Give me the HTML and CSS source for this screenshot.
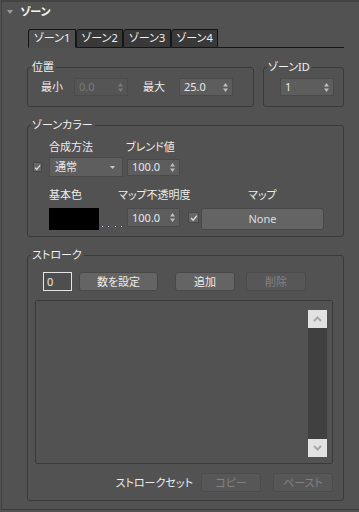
FILE: index.html
```html
<!DOCTYPE html>
<html lang="ja">
<head>
<meta charset="utf-8">
<title>ゾーン</title>
<link rel="stylesheet" href="styles.css">
</head>
<body>
<div class="rollout">
  <div class="rollout-head">
    <svg class="tri" width="6" height="4" viewBox="0 0 6 4"><path d="M0 0H6L3 4Z" fill="#9a9a9a"/></svg>
    <span class="rollout-title">ゾーン</span>
  </div>
  <div class="rollout-body">
    <div class="tabs">
      <div class="tab active w48">ゾーン1</div>
      <div class="tab w47">ゾーン2</div>
      <div class="tab w48">ゾーン3</div>
      <div class="tab w47">ゾーン4</div>
      <div class="tab-fill"></div>
    </div>

    <div class="group-row">
      <fieldset class="group g-pos">
        <legend>位置</legend>
        <div class="gbody pos-body">
          <span class="lbl l-min">最小</span>
          <div class="spin disabled"><span class="val">0.0</span><svg width="5" height="9" viewBox="0 0 5 9"><path d="M2.5 0L5 3.5H0Z M0 5.5H5L2.5 9Z" fill="currentColor"/></svg></div>
          <span class="lbl l-max">最大</span>
          <div class="spin"><span class="val">25.0</span><svg width="5" height="9" viewBox="0 0 5 9"><path d="M2.5 0L5 3.5H0Z M0 5.5H5L2.5 9Z" fill="currentColor"/></svg></div>
        </div>
      </fieldset>
      <fieldset class="group g-id">
        <legend>ゾーンID</legend>
        <div class="gbody id-body">
          <div class="spin"><span class="val">1</span><svg width="5" height="9" viewBox="0 0 5 9"><path d="M2.5 0L5 3.5H0Z M0 5.5H5L2.5 9Z" fill="currentColor"/></svg></div>
        </div>
      </fieldset>
    </div>

    <fieldset class="group g-color">
      <legend>ゾーンカラー</legend>
      <div class="gbody color-body">
        <div class="crow labels1">
          <span class="lbl c-blend-mode">合成方法</span>
          <span class="lbl">ブレンド値</span>
        </div>
        <div class="crow ctrl1">
          <span class="check c1"><svg width="9" height="9" viewBox="0 0 9 9"><path d="M1.2 4.6L3.5 7L7.8 1.8" stroke="#dcdcdc" stroke-width="1.6" fill="none"/></svg></span>
          <div class="dropdown"><span>通常</span><svg width="5" height="3" viewBox="0 0 5 3"><path d="M0 0H5L2.5 3Z" fill="#c8c8c8"/></svg></div>
          <div class="spin s-blend"><span class="val">100.0</span><svg width="5" height="9" viewBox="0 0 5 9"><path d="M2.5 0L5 3.5H0Z M0 5.5H5L2.5 9Z" fill="currentColor"/></svg></div>
        </div>
        <div class="crow labels2">
          <span class="lbl c-base">基本色</span>
          <span class="lbl c-opac">マップ不透明度</span>
          <span class="lbl c-map">マップ</span>
        </div>
        <div class="crow ctrl2">
          <div class="swatch"></div>
          <svg class="dots" width="28" height="3" viewBox="0 0 28 3"><rect x="3" y="1" width="1" height="1" fill="#dfe6ff"/><rect x="9" y="1" width="1" height="1" fill="#dfe6ff"/><rect x="16" y="1" width="1" height="1" fill="#dfe6ff"/><rect x="22" y="1" width="1" height="1" fill="#dfe6ff"/></svg>
          <div class="spin s-opac"><span class="val">100.0</span><svg width="5" height="9" viewBox="0 0 5 9"><path d="M2.5 0L5 3.5H0Z M0 5.5H5L2.5 9Z" fill="currentColor"/></svg></div>
          <span class="check c2"><svg width="9" height="9" viewBox="0 0 9 9"><path d="M1.2 4.6L3.5 7L7.8 1.8" stroke="#dcdcdc" stroke-width="1.6" fill="none"/></svg></span>
          <div class="btn b-none">None</div>
        </div>
      </div>
    </fieldset>

    <fieldset class="group g-stroke">
      <legend>ストローク</legend>
      <div class="gbody stroke-body">
        <div class="srow">
          <div class="num-input">0</div>
          <div class="btn b-count">数を設定</div>
          <div class="btn b-add">追加</div>
          <div class="btn disabled b-del">削除</div>
        </div>
        <div class="listbox">
          <div class="vscroll">
            <div class="sb-btn"><svg width="9" height="6" viewBox="0 0 9 6"><path d="M1 5L4.5 1.5L8 5" stroke="#a8a8a8" stroke-width="2" fill="none"/></svg></div>
            <div class="sb-track"></div>
            <div class="sb-btn"><svg width="9" height="6" viewBox="0 0 9 6"><path d="M1 1L4.5 4.5L8 1" stroke="#a8a8a8" stroke-width="2" fill="none"/></svg></div>
          </div>
        </div>
        <div class="brow">
          <span class="lbl set-lbl">ストロークセット</span>
          <div class="btn disabled b-copy">コピー</div>
          <div class="btn disabled b-paste">ペースト</div>
        </div>
      </div>
    </fieldset>
  </div>
</div>
</body>
</html>
```
FILE: styles.css
```css
* { box-sizing: border-box; }
html, body { margin: 0; padding: 0; background: #525252; }
body {
  width: 359px;
  height: 512px;
  overflow: hidden;
  font-family: "Noto Sans", "Noto Sans CJK JP", sans-serif;
  font-size: 11px;
  line-height: 14px;
  color: #ebebeb;
  font-feature-settings: "palt";
}

.rollout {
  margin-left: 1px;
  height: 510px;
  border-left: 1px solid #3f3f3f;
  border-top: 2px solid #444444;
  border-bottom: 1px solid #3b3b3b;
}
.rollout-head {
  height: 20px;
  display: flex;
  align-items: center;
}
.tri { margin-left: 5px; }
.rollout-title {
  margin-left: 7px;
  font-weight: 700;
  color: #f2f2f2;
}
.rollout-body {
  padding: 7px 0 0 25px;
  width: 342px;
}

/* tabs */
.tabs {
  display: flex;
  height: 19px;
  margin-left: 1px;
  width: 316px;
}
.tab {
  height: 19px;
  border: 1px solid #151515;
  border-top-left-radius: 3px;
  background: #393939;
  color: #f0f0f0;
  text-align: center;
  line-height: 16px;
}
.tab.active { background: #4f4f4f; border-bottom-color: #4f4f4f; }
.w48 { width: 48px; }
.w47 { width: 47px; }
.tab-fill { flex: 1; border-bottom: 1px solid #151515; }

/* groups */
.group {
  margin: 0;
  padding: 0;
  min-width: 0;
  border: 1px solid #3a3a3a;
  border-radius: 3px;
}
.group legend {
  margin-left: 3px;
  padding: 0 2px 0 1px;
  line-height: 14px;
  height: 14px;
  color: #f0f0f0;
}
.group-row {
  display: flex;
  gap: 9px;
  margin-top: 12px;
}
.g-pos { width: 227px; }
.g-id { width: 81px; }
.gbody { display: flex; }
.pos-body { padding: 4px 0 10px 13px; align-items: center; }
.id-body { padding: 4px 0 10px 16px; }
.l-min { width: 33px; }
.l-max { width: 36px; margin-left: 15px; }

.spin {
  width: 54px;
  height: 18px;
  background: #5d5d5d;
  border: 1px solid #4a4a4a;
  display: flex;
  align-items: center;
  justify-content: space-between;
  padding: 0 4px 0 4px;
  color: #bdbdbd;
}
.spin .val { color: #e8e8e8; }
.spin.disabled { background: #555555; border-color: #4b4b4b; color: #7d7d7d; }
.spin.disabled .val { color: #7a7a7a; }

.g-color { width: 317px; margin-top: 11px; }
.color-body { flex-direction: column; padding: 8px 0 6px 0; }
.crow { display: flex; align-items: center; }
.labels1 { padding-left: 21px; height: 14px; }
.c-blend-mode { width: 77px; }
.ctrl1 { margin-top: 3px; height: 20px; padding-left: 5px; }
.check {
  width: 9px;
  height: 10px;
  background: #676767;
  border: 1px solid #484848;
  display: flex;
  align-items: center;
  justify-content: center;
}
.check svg { width: 7px; height: 7px; }
.c1 { margin-right: 7px; }
.dropdown {
  width: 74px;
  height: 20px;
  background: #5e5e5e;
  border: 1px solid #4a4a4a;
  display: flex;
  align-items: center;
  justify-content: space-between;
  padding: 0 7px 0 5px;
}
.s-blend { width: 53px; height: 17px; margin-left: 4px; }
.labels2 { margin-top: 11px; height: 14px; padding-left: 21px; }
.c-base { width: 69px; }
.c-opac { width: 130px; }
.ctrl2 { margin-top: 6px; height: 22px; padding-left: 21px; align-items: flex-start; }
.swatch { width: 50px; height: 22px; background: #000; }
.dots { margin-top: 17px; }
.s-opac { width: 53px; height: 19px; margin-left: 0; }
.c2 { width: 11px; height: 11px; margin: 4px 2px 0 8px; }
.c2 svg { width: 8px; height: 8px; }

.btn {
  height: 19px;
  background: #646464;
  border: 1px solid #484848;
  border-radius: 3px;
  display: flex;
  align-items: center;
  justify-content: center;
  color: #ececec;
}
.btn.disabled { background: #575757; border-color: #4b4b4b; color: #828282; }
.b-none { width: 123px; height: 22px; color: #dcdcdc; background: #646464; }

.g-stroke { width: 317px; margin-top: 11px; }
.stroke-body { flex-direction: column; padding: 10px 0 8px 0; }
.srow { display: flex; height: 19px; }
.num-input {
  width: 29px;
  height: 19px;
  margin-left: 15px;
  border: 1px solid #e4e4e4;
  background: #4e4e4e;
  padding-left: 3px;
  line-height: 17px;
  color: #e8e8e8;
}
.b-count { width: 79px; margin-left: 7px; }
.b-add { width: 60px; margin-left: 17px; }
.b-del { width: 60px; margin-left: 11px; }

.listbox {
  margin: 9px 0 0 7px;
  width: 298px;
  height: 164px;
  border: 1px solid #3a3a3a;
  border-radius: 2px;
  padding: 9px 5px 6px 0;
  display: flex;
  justify-content: flex-end;
}
.vscroll { width: 19px; display: flex; flex-direction: column; }
.sb-btn {
  height: 18px;
  background: #e2e2e2;
  display: flex;
  align-items: center;
  justify-content: center;
}
.sb-track { flex: 1; background: #404040; }

.brow {
  margin-top: 9px;
  display: flex;
  justify-content: flex-end;
  align-items: center;
  padding-right: 10px;
  height: 19px;
}
.set-lbl { margin-right: 8px; }
.b-copy { width: 60px; }
.b-paste { width: 60px; margin-left: 12px; }
```
